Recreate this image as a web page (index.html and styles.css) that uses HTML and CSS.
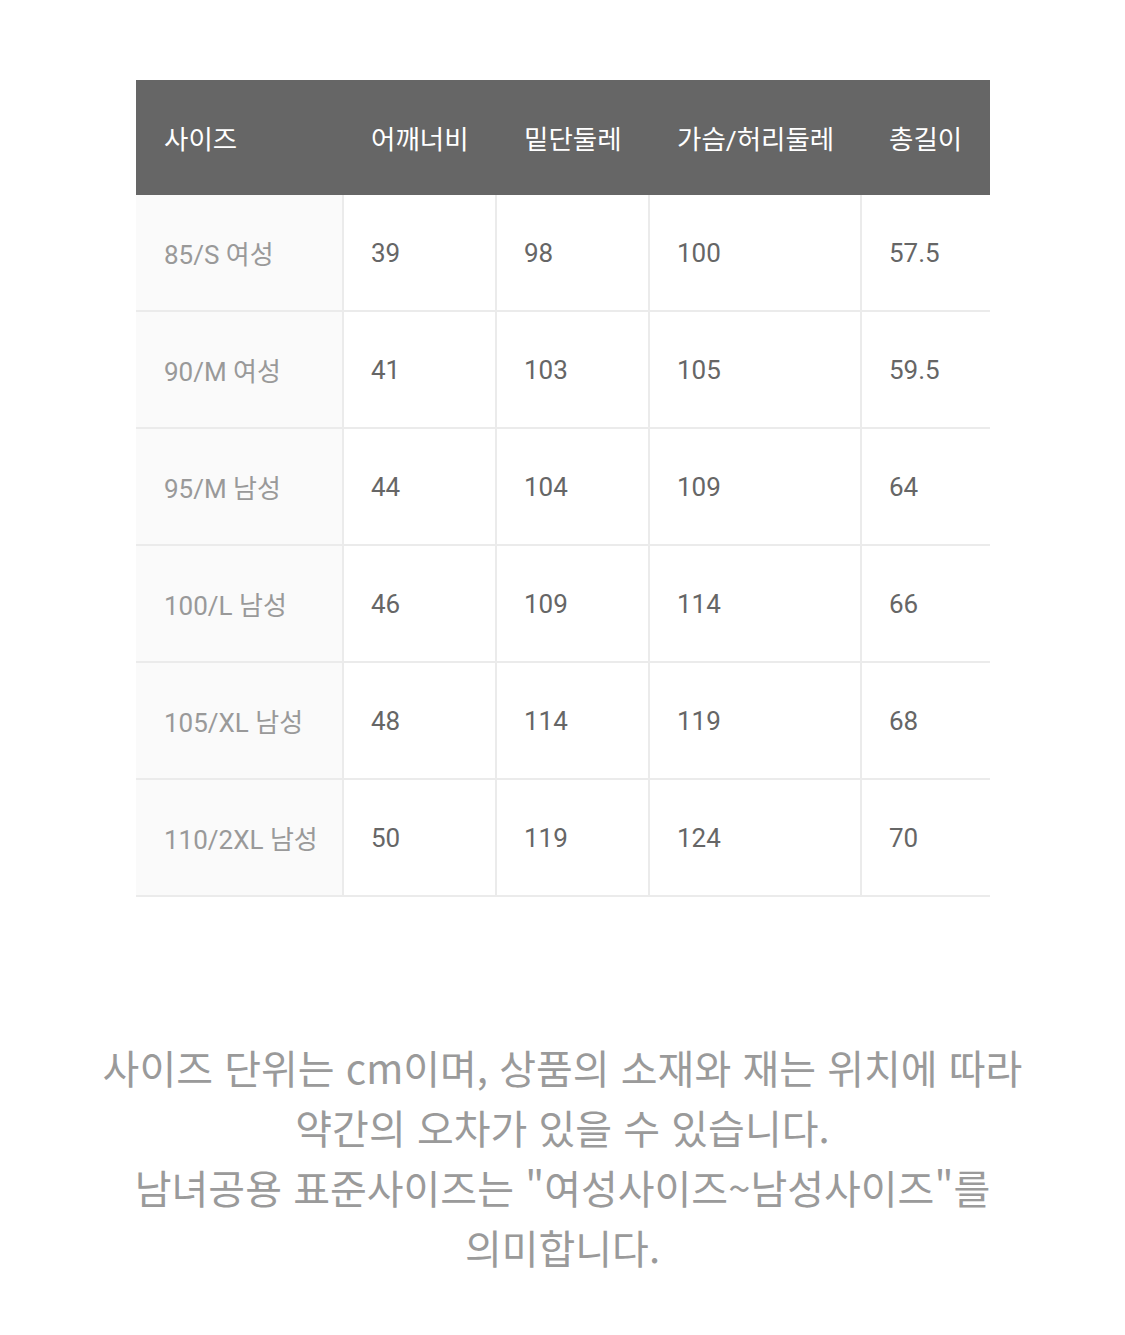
FILE: index.html
```html
<!DOCTYPE html>
<html lang="ko">
<head>
<meta charset="utf-8">
<link rel="stylesheet" href="styles.css">
</head>
<body>
<div class="page">
  <table class="size-table">
    <colgroup>
      <col class="c1"><col class="c2"><col class="c3"><col class="c4"><col class="c5">
    </colgroup>
    <thead>
      <tr>
        <th>사이즈</th><th>어깨너비</th><th>밑단둘레</th><th>가슴/허리둘레</th><th>총길이</th>
      </tr>
    </thead>
    <tbody>
      <tr><td class="size">85/S 여성</td><td>39</td><td>98</td><td>100</td><td>57.5</td></tr>
      <tr><td class="size">90/M 여성</td><td>41</td><td>103</td><td>105</td><td>59.5</td></tr>
      <tr><td class="size">95/M 남성</td><td>44</td><td>104</td><td>109</td><td>64</td></tr>
      <tr><td class="size">100/L 남성</td><td>46</td><td>109</td><td>114</td><td>66</td></tr>
      <tr><td class="size">105/XL 남성</td><td>48</td><td>114</td><td>119</td><td>68</td></tr>
      <tr><td class="size">110/2XL 남성</td><td>50</td><td>119</td><td>124</td><td>70</td></tr>
    </tbody>
  </table>
  <p class="note">사이즈 단위는 cm이며, 상품의 소재와 재는 위치에 따라<br>약간의 오차가 있을 수 있습니다.<br>남녀공용 표준사이즈는 "여성사이즈~남성사이즈"를<br>의미합니다.</p>
</div>
</body>
</html>
```

FILE: styles.css
```css
html, body {
  margin: 0;
  padding: 0;
  background: #ffffff;
}
body {
  font-family: "Noto Sans CJK KR", "Noto Sans", sans-serif;
}
.page {
  width: 1125px;
  padding-top: 80px;
}
.size-table {
  margin-left: 136px;
  width: 854px;
  border-collapse: collapse;
  table-layout: fixed;
  font-family: Roboto, "Noto Sans CJK KR", sans-serif;
}
.c1 { width: 207px; }
.c2 { width: 153px; }
.c3 { width: 153px; }
.c4 { width: 212px; }
.c5 { width: 129px; }
.size-table th {
  background: #666666;
  color: #ffffff;
  font-weight: 400;
  font-size: 26.5px;
  text-align: left;
  height: 115px;
  padding: 0 0 0 28px;
  vertical-align: middle;
  white-space: nowrap;
}
.size-table td {
  height: 115px;
  padding: 0 0 0 27px;
  font-size: 26px;
  color: #666666;
  vertical-align: middle;
  border-bottom: 2px solid #ebebeb;
  border-left: 2px solid #ebebeb;
  white-space: nowrap;
}
.size-table td.size {
  background: #fafafa;
  color: #999999;
  border-left: none;
  padding-left: 28px;
}
.note {
  margin: 140px 0 0 0;
  text-align: center;
  font-size: 40px;
  line-height: 60px;
  color: #9a9a9a;
}
```
